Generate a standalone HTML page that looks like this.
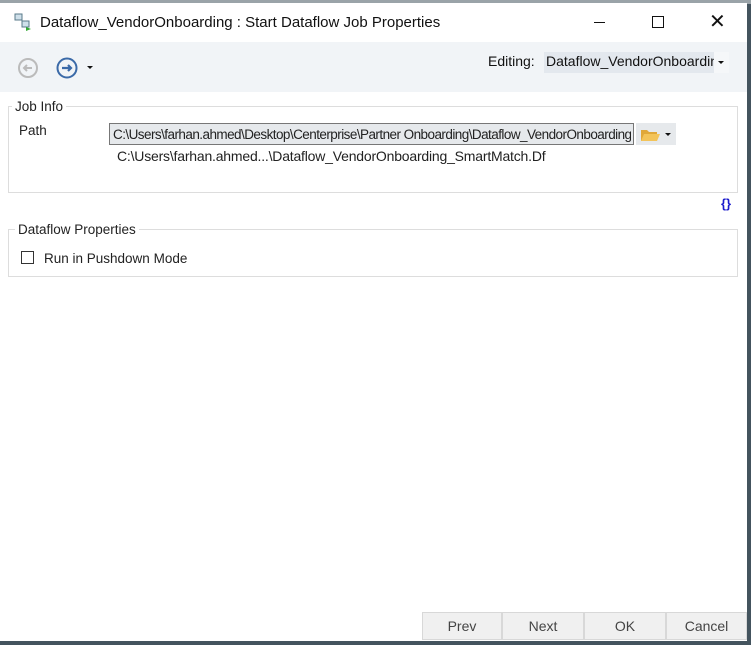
<!DOCTYPE html><html><head><style>
body{margin:0;width:751px;height:645px;background:#44545e;position:relative;overflow:hidden;font-family:"Liberation Sans",sans-serif;}
.win{position:absolute;left:0;top:3px;width:747px;height:638px;background:#fff;}
.a{position:absolute;}
.t{font-size:14px;color:#111;}
.s{font-size:13px;color:#222;}
.btn{position:absolute;top:609px;height:28px;background:#f0f0f0;border:1px solid #d8d8d8;box-sizing:border-box;font-size:14px;color:#444;text-align:center;line-height:27px;}
</style></head><body>
<div class="a" style="left:0;top:0;width:751px;height:4px;background:#9aa3a8"></div>
<div class="win">
 <svg class="a" style="left:14px;top:10px" width="18" height="18"><rect x="1" y="1" width="7" height="6" fill="#cfe0ea" stroke="#5a7a8a"/><rect x="8" y="8" width="7" height="6" fill="#cfe0ea" stroke="#5a7a8a"/><path d="M12 14 l5 2 -5 2z" fill="#3a3"/></svg>
 <div class="a t" style="left:40px;top:11px;font-size:15px">Dataflow_VendorOnboarding : Start Dataflow Job Properties</div>
 <div class="a" style="left:594px;top:19px;width:11px;height:1px;background:#111"></div>
 <div class="a" style="left:652px;top:13px;width:10px;height:10px;border:1px solid #111"></div>
 <div class="a" style="left:709px;top:6px;font-size:20px;color:#111">✕</div>
 <div class="a" style="left:0;top:39px;width:747px;height:50px;background:#f1f4f7"></div>
 <svg class="a" style="left:17px;top:54px" width="22" height="22"><circle cx="11" cy="11" r="9" fill="none" stroke="#bbb" stroke-width="2"/><path d="M15 11H7M10 8l-3 3 3 3" stroke="#bbb" stroke-width="2" fill="none"/></svg>
 <svg class="a" style="left:55px;top:53px" width="24" height="24"><circle cx="12" cy="12" r="9.5" fill="none" stroke="#3b6aa8" stroke-width="2"/><path d="M7 12h9M13 9l3 3-3 3" stroke="#3b6aa8" stroke-width="2.2" fill="none"/></svg>
 <div class="a" style="left:87px;top:63px;border-left:3px solid transparent;border-right:3px solid transparent;border-top:3px solid #111"></div>
 <div class="a t" style="left:488px;top:50px">Editing:</div>
 <div class="a" style="left:544px;top:49px;width:185px;height:21px;background:#e3e8ee"></div>
 <div class="a t" style="left:546px;top:50px;width:168px;overflow:hidden;white-space:nowrap">Dataflow_VendorOnboarding</div>
 <div class="a" style="left:714px;top:49px;width:15px;height:21px;background:#f5f7f9"></div>
 <div class="a" style="left:718px;top:58px;border-left:3px solid transparent;border-right:3px solid transparent;border-top:3px solid #111"></div>
 <div class="a" style="left:8px;top:103px;width:728px;height:85px;border:1px solid #ddd"></div>
 <div class="a s" style="left:12px;top:96px;background:#fff;padding:0 3px;font-size:13.5px">Job Info</div>
 <div class="a s" style="left:19px;top:120px;font-size:13.5px">Path</div>
 <div class="a" style="left:109px;top:120px;width:525px;height:22px;border:1px solid #777;background:#e6e9ec;box-sizing:border-box"></div>
 <div class="a s" style="left:113px;top:124px;width:518px;overflow:hidden;white-space:nowrap;letter-spacing:-0.55px;font-size:13.5px">C:\Users\farhan.ahmed\Desktop\Centerprise\Partner Onboarding\Dataflow_VendorOnboarding</div>
 <div class="a" style="left:636px;top:120px;width:40px;height:22px;background:#e6e9ec"></div>
 <svg class="a" style="left:640px;top:124px" width="22" height="16"><path d="M1 3h6l2 2h8v9H1z" fill="#e0a83a"/><path d="M4 7h16l-3 7H1z" fill="#f3c45a"/></svg>
 <div class="a" style="left:665px;top:130px;border-left:3px solid transparent;border-right:3px solid transparent;border-top:3px solid #111"></div>
 <div class="a s" style="left:117px;top:145px;letter-spacing:-0.2px;font-size:14px">C:\Users\farhan.ahmed...\Dataflow_VendorOnboarding_SmartMatch.Df</div>
 <div class="a" style="left:721px;top:193px;font-size:13px;font-weight:bold;color:#1a1acc">{}</div>
 <div class="a" style="left:8px;top:226px;width:728px;height:46px;border:1px solid #ddd"></div>
 <div class="a s" style="left:15px;top:219px;background:#fff;padding:0 3px;font-size:13.5px">Dataflow Properties</div>
 <div class="a" style="left:21px;top:248px;width:13px;height:13px;border:1px solid #333;box-sizing:border-box"></div>
 <div class="a s" style="left:44px;top:248px;font-size:13.5px">Run in Pushdown Mode</div>
 <div class="btn" style="left:422px;width:80px">Prev</div>
 <div class="btn" style="left:502px;width:82px">Next</div>
 <div class="btn" style="left:584px;width:82px">OK</div>
 <div class="btn" style="left:666px;width:81px">Cancel</div>
</div>
</body></html>
